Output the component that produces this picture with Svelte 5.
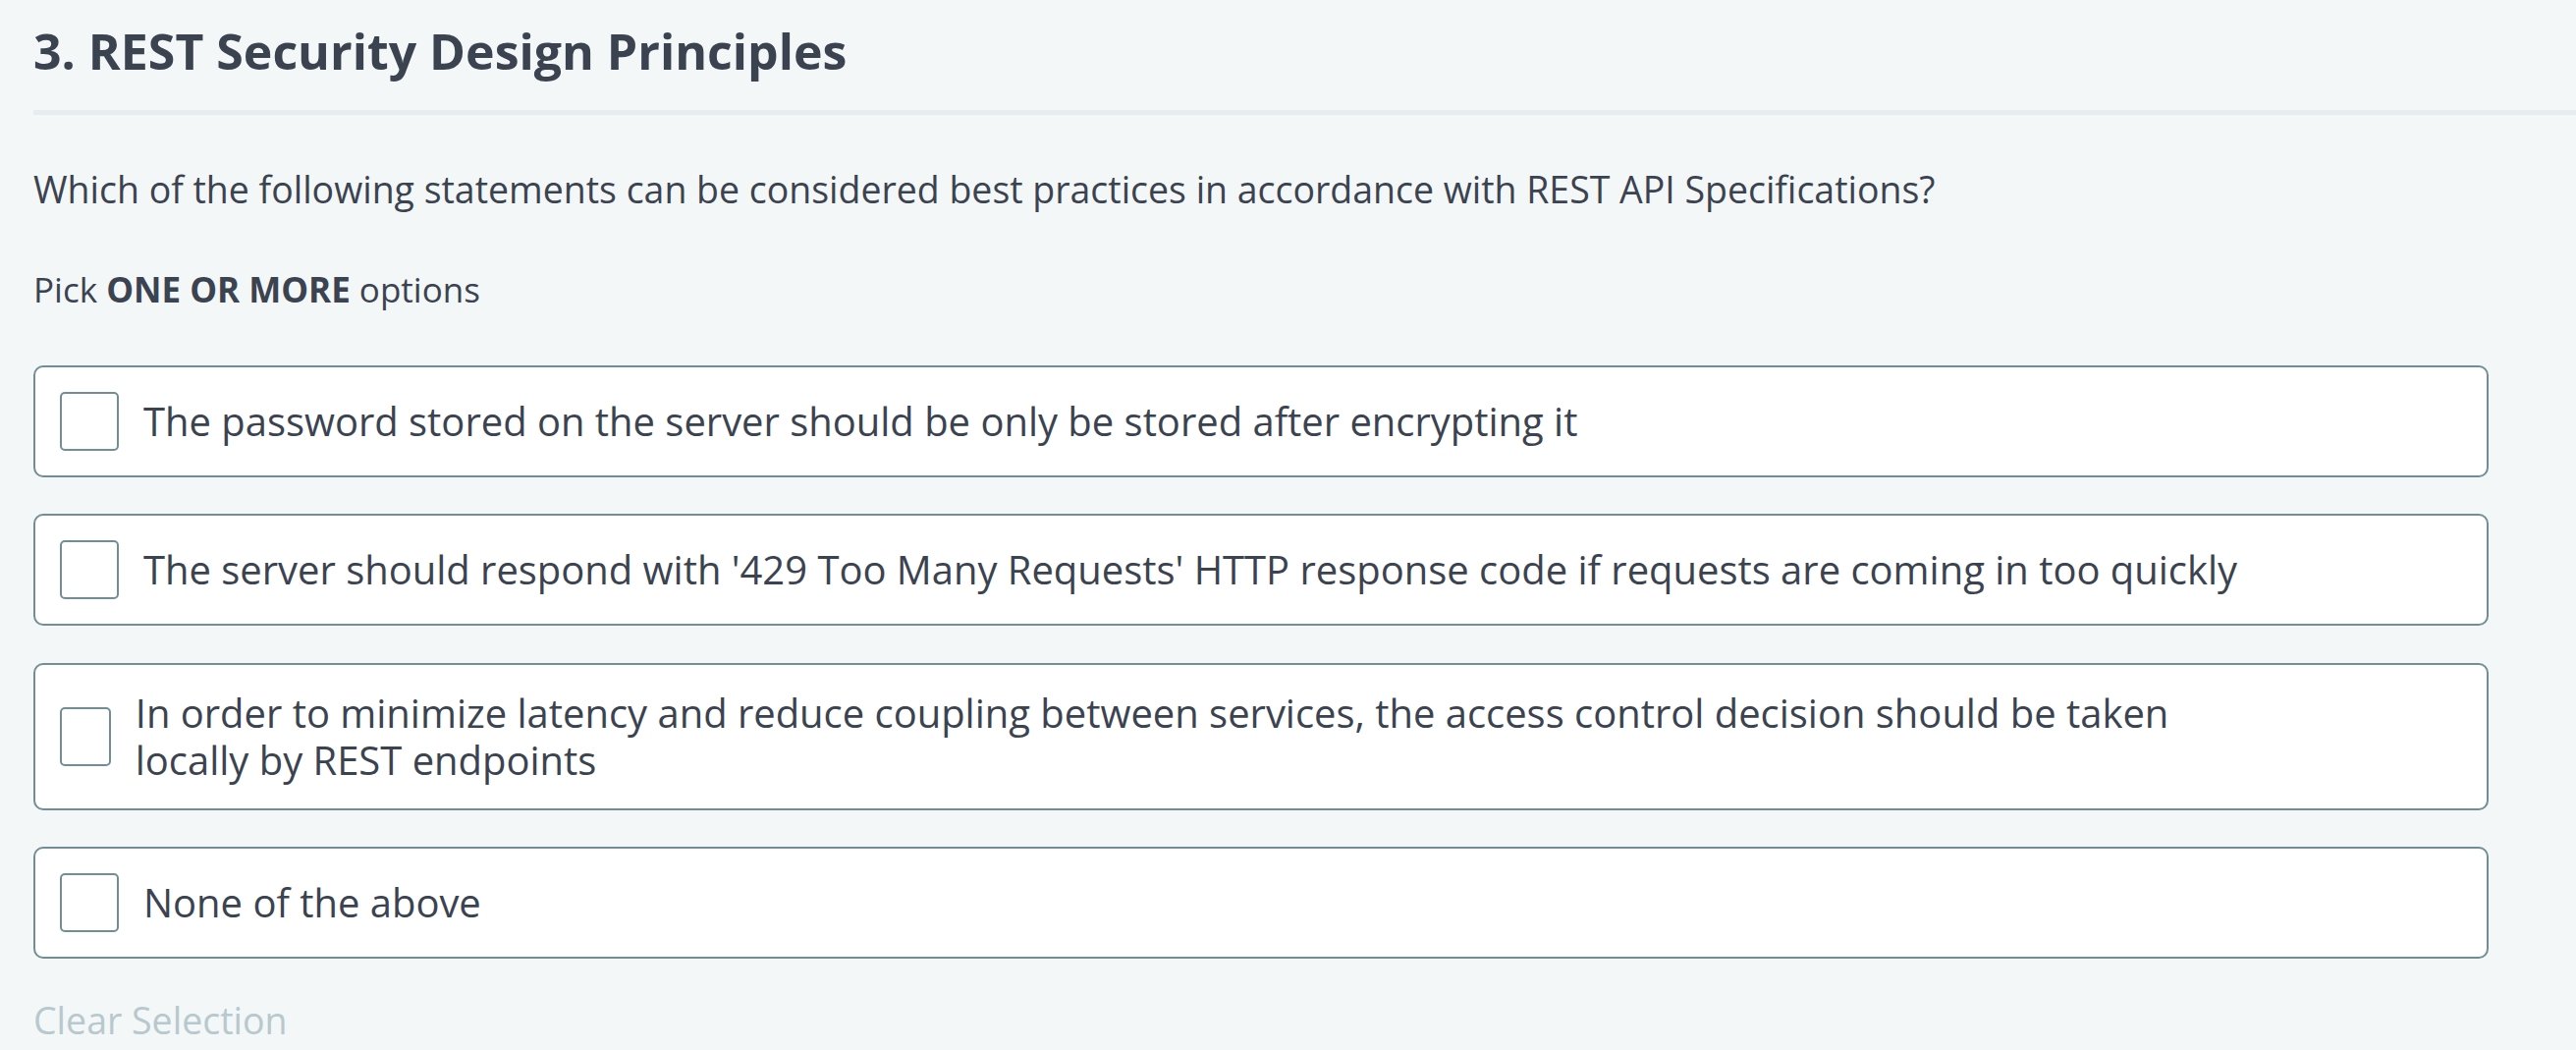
<script lang="ts">
const title = "3. REST Security Design Principles";
const question = "Which of the following statements can be considered best practices in accordance with REST API Specifications?";

let options = $state([
    { text: "The password stored on the server should be only be stored after encrypting it", checked: false },
    { text: "The server should respond with '429 Too Many Requests' HTTP response code if requests are coming in too quickly", checked: false },
    { text: "In order to minimize latency and reduce coupling between services, the access control decision should be taken locally by REST endpoints", checked: false },
    { text: "None of the above", checked: false },
]);

function clearSelection() {
    for (const option of options) {
        option.checked = false;
    }
}
</script>

<main>
    <h1>{title}</h1>
    <p class="question">{question}</p>
    <p class="hint">Pick <strong>ONE OR MORE</strong> options</p>
    <div class="options">
        {#each options as option}
            <label class="option">
                <input type="checkbox" bind:checked={option.checked} />
                <span>{option.text}</span>
            </label>
        {/each}
    </div>
    <button onclick={clearSelection}>Clear Selection</button>
</main>

<style>
    :global(body) {
        background-color: #f3f7f8;
    }

    main {
        height: 1069px;
        padding-left: 34px;
        box-sizing: border-box;
        overflow: hidden;
        font-family: "Open Sans", sans-serif;
        color: #3b4350;
    }

    h1 {
        margin: 0;
        padding: 17px 0 25px;
        border-bottom: 5px solid #e5edef;
        font-size: 50px;
        line-height: 70px;
        font-weight: 700;
    }

    p {
        margin: 0;
    }

    .question {
        margin-top: 50px;
        font-size: 37.46px;
        line-height: 51px;
    }

    .hint {
        margin-top: 53px;
        font-size: 35px;
        line-height: 47px;
    }

    .options {
        width: 2500px;
        margin-top: 54px;
        display: flex;
        flex-direction: column;
        gap: 37.33px;
    }

    .option {
        display: flex;
        align-items: center;
        box-sizing: border-box;
        padding: 25px 220px 25px 25px;
        border: 2px solid #718e94;
        border-radius: 10px;
        background-color: #fff;
        font-size: 39.955px;
        line-height: 48px;
    }

    input {
        appearance: none;
        width: 60px;
        height: 60px;
        margin: 0 25px 0 0;
        box-sizing: border-box;
        border: 2px solid #718e94;
        border-radius: 5px;
        background-color: #fff;
    }

    input:checked {
        background-color: #718e94;
    }

    button {
        display: block;
        margin-top: 37px;
        padding: 0;
        border: 0;
        background: none;
        font: inherit;
        font-size: 37.5px;
        line-height: 51px;
        color: #b7c9cd;
    }
</style>
